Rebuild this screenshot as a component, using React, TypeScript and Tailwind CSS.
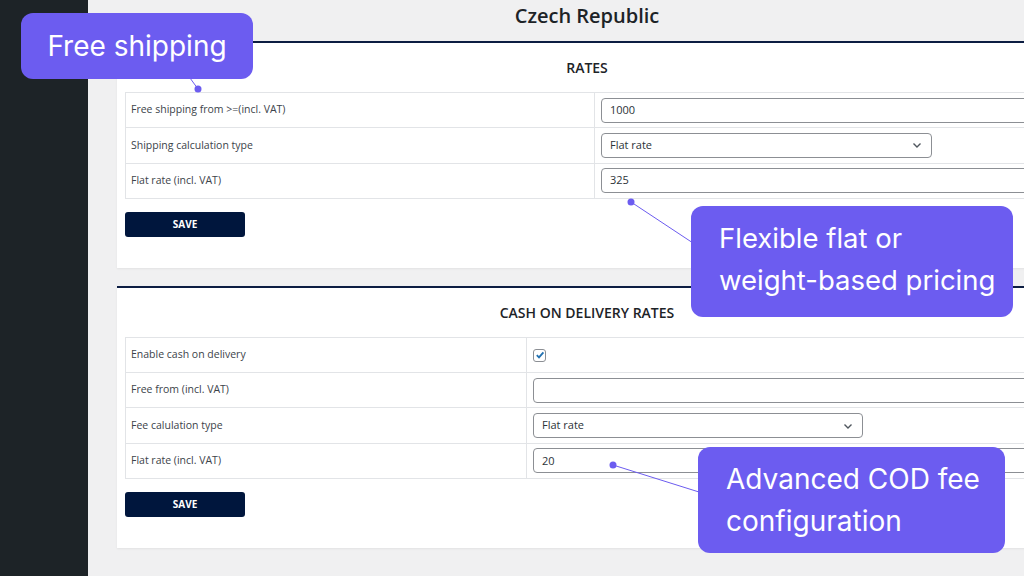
import React from 'react'

const ui = { fontFamily: '"Open Sans", "Noto Sans", sans-serif' }
const callout = { fontFamily: 'Inter, "Noto Sans", sans-serif' }

function Chevron() {
  return (
    <svg width="12" height="12" viewBox="0 0 12 12" className="text-[#50575e]">
      <path d="M2.5 4.5 L6 8 L9.5 4.5" fill="none" stroke="currentColor" strokeWidth="1.4" />
    </svg>
  )
}

function TextInput({ value }: { value: string }) {
  return (
    <div className="h-[25px] w-full border border-[#8c8f94] rounded-[4px] bg-white flex items-center px-2 text-[11px] text-[#2c3338]">
      {value}
    </div>
  )
}

function Select({ value, width }: { value: string; width: string }) {
  return (
    <div className={`h-[25px] ${width} border border-[#8c8f94] rounded-[4px] bg-white flex items-center justify-between pl-2 pr-2 text-[11px] text-[#2c3338]`}>
      <span>{value}</span>
      <Chevron />
    </div>
  )
}

function Checkbox() {
  return (
    <div className="w-[13px] h-[13px] border border-[#8c8f94] rounded-[3px] bg-white flex items-center justify-center">
      <svg width="10" height="10" viewBox="0 0 10 10">
        <path d="M1.8 5.2 L4 7.4 L8.4 2.4" fill="none" stroke="#2271b1" strokeWidth="1.8" />
      </svg>
    </div>
  )
}

type Row = { label: string; field: React.ReactNode }

function Card({ title, rows, labelWidth }: { title: string; rows: Row[]; labelWidth: string }) {
  return (
    <div className="bg-white border-t-2 border-[#0c1d42] shadow-[0_1px_2px_rgba(0,0,0,0.06)] px-2 pb-[31px]">
      <div className="h-[49px] flex items-center justify-center text-[14px] font-semibold text-[#1d2327]">{title}</div>
      <div className="border border-[#e2e4e7]">
        {rows.map((r, i) => (
          <div key={i} className={`flex h-[34.3px] box-content ${i > 0 ? 'border-t border-[#e2e4e7]' : ''}`}>
            <div className={`${labelWidth} shrink-0 flex items-center px-[5px] text-[10.5px] text-[#3c434a] border-r border-[#e2e4e7]`}>
              {r.label}
            </div>
            <div className="flex-1 flex items-center px-[6px]">{r.field}</div>
          </div>
        ))}
      </div>
      <button className="mt-[13px] w-[120px] h-[25px] rounded-[3px] bg-[#00163d] text-white text-[10px] font-bold">
        SAVE
      </button>
    </div>
  )
}

export default function App() {
  return (
    <div className="relative w-[1024px] h-[576px] overflow-hidden flex bg-[#f0f0f1]" style={ui}>
      <div className="w-[88px] shrink-0 bg-[#1d2327]" />
      <div className="flex-1 overflow-hidden">
        <div className="w-[940px] ml-[29px]">
          <div className="h-[41px] flex items-center justify-center pb-[12px] pt-[2px] text-[20px] font-semibold text-[#1d2327]">
            Czech Republic
          </div>
          <Card
            title="RATES"
            labelWidth="w-[469px]"
            rows={[
              { label: 'Free shipping from >=(incl. VAT)', field: <TextInput value="1000" /> },
              { label: 'Shipping calculation type', field: <Select value="Flat rate" width="w-[331px]" /> },
              { label: 'Flat rate (incl. VAT)', field: <TextInput value="325" /> },
            ]}
          />
          <div className="h-[18px]" />
          <Card
            title="CASH ON DELIVERY RATES"
            labelWidth="w-[401px]"
            rows={[
              { label: 'Enable cash on delivery', field: <Checkbox /> },
              { label: 'Free from (incl. VAT)', field: <TextInput value="" /> },
              { label: 'Fee calulation type', field: <Select value="Flat rate" width="w-[330px]" /> },
              { label: 'Flat rate (incl. VAT)', field: <TextInput value="20" /> },
            ]}
          />
        </div>
      </div>

      <svg className="absolute inset-0 pointer-events-none" width="1024" height="576">
        <line x1="190" y1="78" x2="198" y2="89" stroke="#6c5cf0" strokeWidth="1" />
        <circle cx="198" cy="89" r="3.5" fill="#6c5cf0" />
        <line x1="631" y1="202" x2="693" y2="243" stroke="#6c5cf0" strokeWidth="1" />
        <circle cx="631" cy="202" r="3.5" fill="#6c5cf0" />
        <line x1="613" y1="465" x2="699" y2="492" stroke="#6c5cf0" strokeWidth="1" />
        <circle cx="613" cy="465" r="3.5" fill="#6c5cf0" />
      </svg>

      <div
        className="absolute left-[21px] top-[13px] w-[232px] h-[66px] rounded-[12px] bg-[#6c5cf0] text-white text-[28px] flex items-center justify-center"
        style={callout}
      >
        Free shipping
      </div>
      <div
        className="absolute left-[691px] top-[206px] w-[322px] h-[111px] rounded-[12px] bg-[#6c5cf0] text-white text-[27.5px] leading-[42px] flex flex-col justify-center pl-[28px] pb-[6px]"
        style={callout}
      >
        <span>Flexible flat or</span>
        <span>weight-based pricing</span>
      </div>
      <div
        className="absolute left-[698px] top-[447px] w-[307px] h-[106px] rounded-[12px] bg-[#6c5cf0] text-white text-[28px] leading-[42px] flex flex-col justify-center pl-[28px]"
        style={callout}
      >
        <span>Advanced COD fee</span>
        <span>configuration</span>
      </div>
    </div>
  )
}
